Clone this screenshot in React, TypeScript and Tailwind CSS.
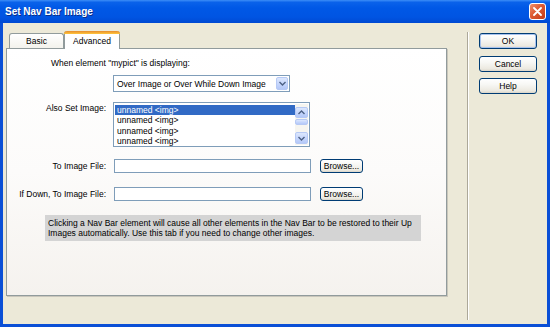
import React from "react";

const xpBtn =
  "border border-[#003c74] rounded-[3px] bg-[linear-gradient(to_bottom,#ffffff_0%,#f7f7f4_40%,#ece9e0_85%,#d9d4c8_100%)] flex items-center justify-center text-black leading-[10px]";

function Chevron({ up = false }: { up?: boolean }) {
  return (
    <svg width="7" height="5" viewBox="0 0 7 5" className="block">
      {up ? (
        <path d="M0.5 4 L3.5 1 L6.5 4" fill="none" stroke="#4d6185" strokeWidth="1.4" />
      ) : (
        <path d="M0.5 1 L3.5 4 L6.5 1" fill="none" stroke="#4d6185" strokeWidth="1.4" />
      )}
    </svg>
  );
}

const blueBtn =
  "border border-[#b6c9f5] rounded-[2px] bg-[linear-gradient(to_bottom,#dce7fd,#c3d4fc_60%,#b4c8f8)] flex items-center justify-center";

export default function App() {
  return (
    <div className="w-[550px] h-[327px] overflow-hidden bg-[#0a4fd6] flex flex-col font-['Liberation_Sans',Arial,sans-serif] text-[8.5px] text-black">
      {/* Title bar */}
      <div className="h-[23px] shrink-0 flex items-center justify-between bg-[linear-gradient(to_bottom,#3d8ef7_0%,#0a62ea_10%,#0058e6_35%,#0054e2_75%,#0049d2_100%)]">
        <span className="pl-[5px] text-white font-bold text-[10px] leading-[12px] [text-shadow:1px_1px_0_#0b2f8a]">
          Set Nav Bar Image
        </span>
        <div className="mr-[4px] w-[17px] h-[17px] rounded-[3px] border border-white bg-[linear-gradient(135deg,#f0906c,#dd5a32_45%,#c23a17)] flex items-center justify-center">
          <svg width="9" height="9" viewBox="0 0 9 9">
            <path d="M1 1 L8 8 M8 1 L1 8" stroke="white" strokeWidth="1.8" strokeLinecap="round" />
          </svg>
        </div>
      </div>

      {/* Body */}
      <div className="flex-1 mx-[3px] mb-[3px] bg-[#ece9d8] flex">
        {/* Left: tabs + panel */}
        <div className="pt-[8px] pl-[3px] flex flex-col">
          <div className="flex items-end h-[17px] pl-[3px]">
            <div className="w-[55px] h-[15px] border border-b-0 border-[#919b9c] rounded-t-[3px] bg-[linear-gradient(to_bottom,#ffffff,#f3f2ec)] flex items-center justify-center leading-[10px]">
              Basic
            </div>
            <div className="relative z-10 -mb-px w-[56px] h-[18px] border-x border-[#919b9c] rounded-t-[3px] bg-white flex flex-col">
              <div className="h-[3px] -mx-px rounded-t-[3px] bg-[linear-gradient(to_bottom,#e68b2c,#ffc73c)]" />
              <div className="flex-1 flex items-center justify-center leading-[10px] pb-[1px]">Advanced</div>
            </div>
          </div>

          <div className="w-[441px] h-[248px] border border-[#919b9c] bg-[linear-gradient(to_bottom,#ffffff_0%,#fcfbfa_50%,#f5f2ee_100%)] shadow-[1px_1px_0_#c9c6bb] flex flex-col">
            <div className="pl-[44px] pt-[9px] leading-[10px]">When element "mypict" is displaying:</div>

            <div className="mt-[7px] ml-[106px] w-[177px] h-[17px] border border-[#7f9db9] bg-white flex items-center justify-between pl-[3px] pr-[1px]">
              <span className="leading-[10px]">Over Image or Over While Down Image</span>
              <div className={`${blueBtn} w-[12px] h-[13px]`}>
                <Chevron />
              </div>
            </div>

            <div className="mt-[10px] flex">
              <div className="w-[99px] text-right pt-[1px] leading-[10px]">Also Set Image:</div>
              <div className="ml-[7px] w-[197px] h-[45px] border border-[#7f9db9] bg-white flex p-px">
                <div className="flex-1 flex flex-col pt-px leading-[10.4px]">
                  <div className="bg-[#316ac5] text-white pl-[2px] h-[10.4px]">unnamed &lt;img&gt;</div>
                  <div className="pl-[2px] h-[10.4px]">unnamed &lt;img&gt;</div>
                  <div className="pl-[2px] h-[10.4px]">unnamed &lt;img&gt;</div>
                  <div className="pl-[2px] h-[10.4px]">unnamed &lt;img&gt;</div>
                </div>
                <div className="w-[13px] bg-[#f6f5f0] flex flex-col pt-[3px] pb-[1px]">
                  <div className={`${blueBtn} h-[11px]`}>
                    <Chevron up />
                  </div>
                  <div className={`${blueBtn} h-[6px] mt-[1px]`} />
                  <div className="flex-1" />
                  <div className={`${blueBtn} h-[12px]`}>
                    <Chevron />
                  </div>
                </div>
              </div>
            </div>

            <div className="mt-[12px] flex items-center">
              <div className="w-[99px] text-right leading-[10px]">To Image File:</div>
              <div className="ml-[8px] w-[197px] h-[14px] border border-[#7f9db9] bg-white" />
              <div className={`${xpBtn} ml-[9px] w-[43px] h-[14px] rounded-[2px]`}>Browse...</div>
            </div>

            <div className="mt-[14px] flex items-center">
              <div className="w-[99px] text-right leading-[10px]">If Down, To Image File:</div>
              <div className="ml-[8px] w-[197px] h-[14px] border border-[#7f9db9] bg-white" />
              <div className={`${xpBtn} ml-[9px] w-[43px] h-[14px] rounded-[2px]`}>Browse...</div>
            </div>

            <div className="mt-[14px] ml-[38px] w-[376px] h-[26px] bg-[#d4d4d4] pl-[3px] pt-[3px] leading-[10px]">
              Clicking a Nav Bar element will cause all other elements in the Nav Bar to be restored to their Up
              <br />
              Images automatically. Use this tab if you need to change other images.
            </div>
          </div>
        </div>

        {/* Separator */}
        <div className="ml-[20px] mt-[9px] mb-[4px] w-[2px] border-l border-[#aca899] bg-white" />

        {/* Buttons */}
        <div className="ml-[10px] pt-[10px] flex flex-col">
          <div className={`${xpBtn} w-[58px] h-[16px] shadow-[inset_0_0_0_1px_#a8c3ee]`}>OK</div>
          <div className={`${xpBtn} w-[58px] h-[16px] mt-[7px]`}>Cancel</div>
          <div className={`${xpBtn} w-[58px] h-[16px] mt-[6px]`}>Help</div>
        </div>
      </div>
    </div>
  );
}
